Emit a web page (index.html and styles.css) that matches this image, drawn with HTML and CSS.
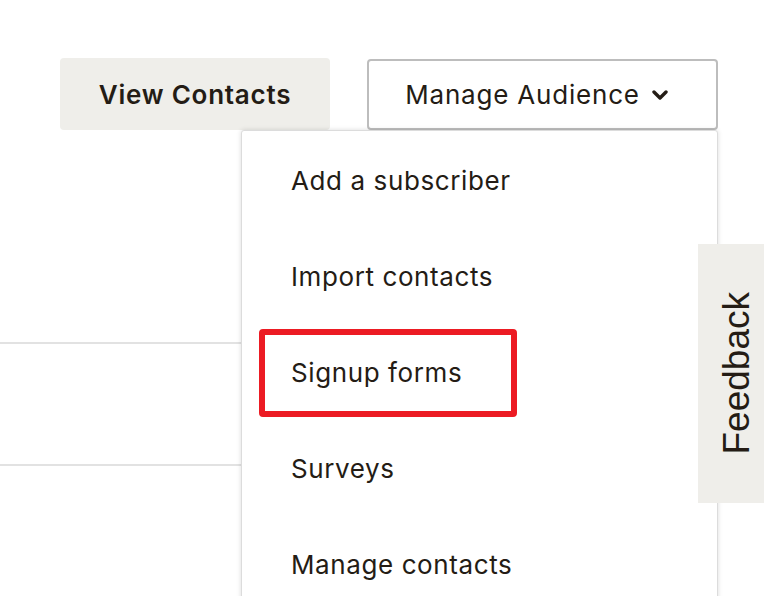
FILE: index.html
```html
<!DOCTYPE html>
<html lang="en">
<head>
<meta charset="utf-8">
<title>Audience</title>
<link rel="stylesheet" href="styles.css">
</head>
<body>
<div class="page">
  <header class="toolbar">
    <button class="btn btn-secondary" type="button">View Contacts</button>
    <div class="menu-wrap">
      <button class="btn btn-outline" type="button">Manage Audience
        <svg class="chevron" width="16" height="11" viewBox="0 0 16 11" aria-hidden="true"><polyline points="2,2 8,8 14,2" fill="none" stroke="#241c15" stroke-width="3.4" stroke-linecap="round" stroke-linejoin="round"/></svg>
      </button>
      <ul class="dropdown">
        <li class="dropdown-item">Add a subscriber</li>
        <li class="dropdown-item">Import contacts</li>
        <li class="dropdown-item">Signup forms<span class="highlight"></span></li>
        <li class="dropdown-item">Surveys</li>
        <li class="dropdown-item">Manage contacts</li>
      </ul>
    </div>
  </header>
  <section class="rows">
    <div class="row"></div>
    <div class="row"></div>
  </section>
</div>
<aside class="feedback"><span class="feedback-label">Feedback</span></aside>
</body>
</html>
```
FILE: styles.css
```css
* { box-sizing: border-box; }
html, body {
  margin: 0;
  padding: 0;
  background: #ffffff;
  overflow: hidden;
}
body {
  width: 764px;
  height: 596px;
  font-family: "Inter", "Liberation Sans", sans-serif;
  color: #241c15;
  position: relative;
}
.page {
  padding-top: 58px;
}
.toolbar {
  display: flex;
  justify-content: flex-end;
  align-items: flex-start;
  gap: 37px;
  padding-right: 46px;
}
.btn {
  font-family: inherit;
  color: #241c15;
  height: 72px;
  border-radius: 4px;
  display: flex;
  align-items: center;
  justify-content: center;
  cursor: pointer;
  margin: 0;
}
.btn-secondary {
  width: 270px;
  background: #efeeea;
  border: none;
  font-size: 26px;
  font-weight: 600;
  letter-spacing: 0.75px;
}
.btn-outline {
  width: 351px;
  background: #ffffff;
  border: 2px solid #bdbdbd;
  font-size: 26px;
  font-weight: 400;
  letter-spacing: 0.8px;
  gap: 12px;
  margin-top: 1px;
  height: 71px;
  padding: 0 12px 0 0;
}
.chevron { margin-top: 2px; }
.menu-wrap {
  position: relative;
}
.dropdown {
  position: absolute;
  top: 72px;
  right: 0;
  width: 477px;
  margin: 0;
  padding: 1px 0 0;
  list-style: none;
  background: #ffffff;
  border: 1px solid #dcdcdc;
  border-radius: 3px;
  box-shadow: 0 0 5px rgba(0, 0, 0, 0.14);
  z-index: 5;
}
.dropdown-item {
  position: relative;
  height: 96px;
  display: flex;
  align-items: center;
  padding-left: 49px;
  font-size: 26px;
  letter-spacing: 0.6px;
}
.highlight {
  position: absolute;
  left: 17px;
  top: 5px;
  width: 258px;
  height: 88px;
  border: 6px solid #ec1b23;
  border-radius: 4px;
}
.rows {
  margin-top: 212px;
}
.row {
  height: 122px;
  border-top: 2px solid #e2e2e2;
}
.feedback {
  position: absolute;
  left: 698px;
  top: 244px;
  width: 70px;
  height: 259px;
  background: #efeeea;
  display: flex;
  align-items: center;
  justify-content: flex-start;
  padding-left: 20px;
  z-index: 6;
}
.feedback-label {
  writing-mode: vertical-rl;
  transform: rotate(180deg);
  font-family: "Liberation Sans", Arial, sans-serif;
  font-size: 37px;
  color: #241c15;
  line-height: 1;
}
```
